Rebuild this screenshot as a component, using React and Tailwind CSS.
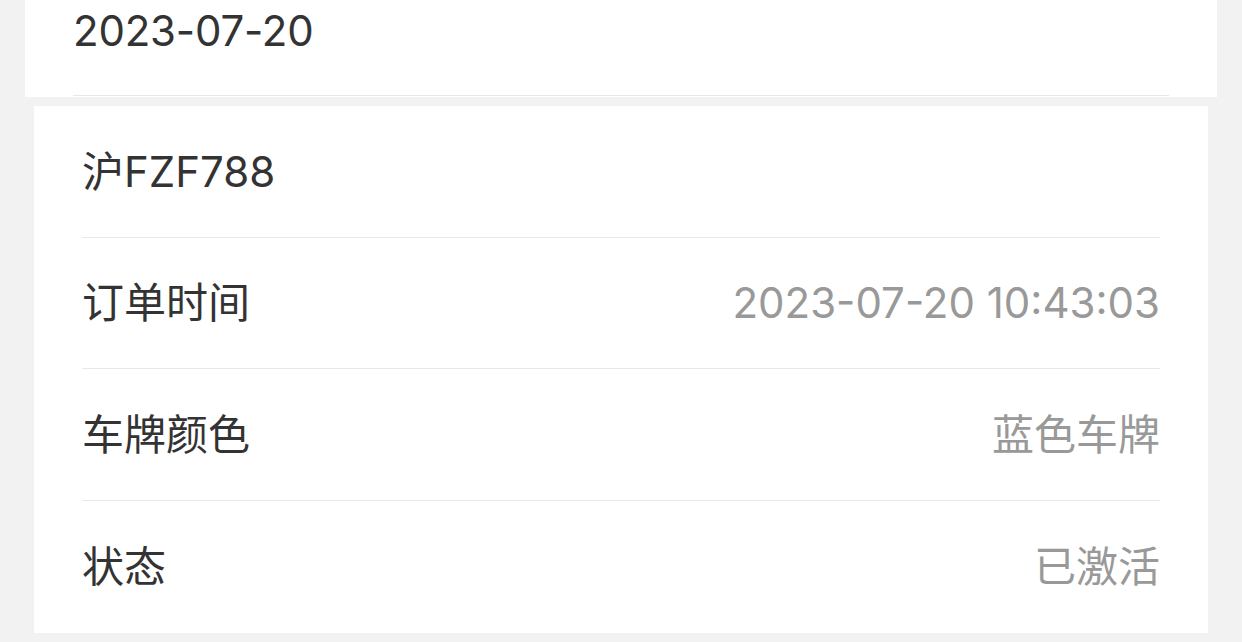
import React from "react";

const font = { fontFamily: '"Inter", "Noto Sans CJK SC", sans-serif' };

const rows = [
  { label: "沪FZF788", value: "", h: "h-[132px]" },
  { label: "订单时间", value: "2023-07-20 10:43:03", h: "h-[131px]" },
  { label: "车牌颜色", value: "蓝色车牌", h: "h-[132px]" },
  { label: "状态", value: "已激活", h: "h-[132px]" },
];

export default function App() {
  return (
    <div
      className="w-[1242px] h-[642px] bg-[#f2f2f2] overflow-hidden font-['Inter','Noto_Sans_CJK_SC',sans-serif]"
      style={font}
    >
      <div className="ml-[25px] w-[1192px] h-[97px] bg-white px-[48px]">
        <div className="h-[96px] border-b border-[#e8e8e8] flex flex-col">
          <div className="h-[62px] flex items-center text-[42px] text-[#333333] leading-none tracking-[-0.2px]">
            2023-07-20
          </div>
        </div>
      </div>
      <div className="mt-[9px] ml-[34px] w-[1174px] bg-white px-[48px]">
        {rows.map((r, i) => (
          <div
            key={i}
            className={
              i < rows.length - 1
                ? r.h + " border-b border-[#e8e8e8] flex items-center justify-between"
                : r.h + " flex items-center justify-between"
            }
          >
            <span className="text-[42px] text-[#333333] leading-none">{r.label}</span>
            <span className="text-[42px] text-[#999999] leading-none">{r.value}</span>
          </div>
        ))}
      </div>
    </div>
  );
}
